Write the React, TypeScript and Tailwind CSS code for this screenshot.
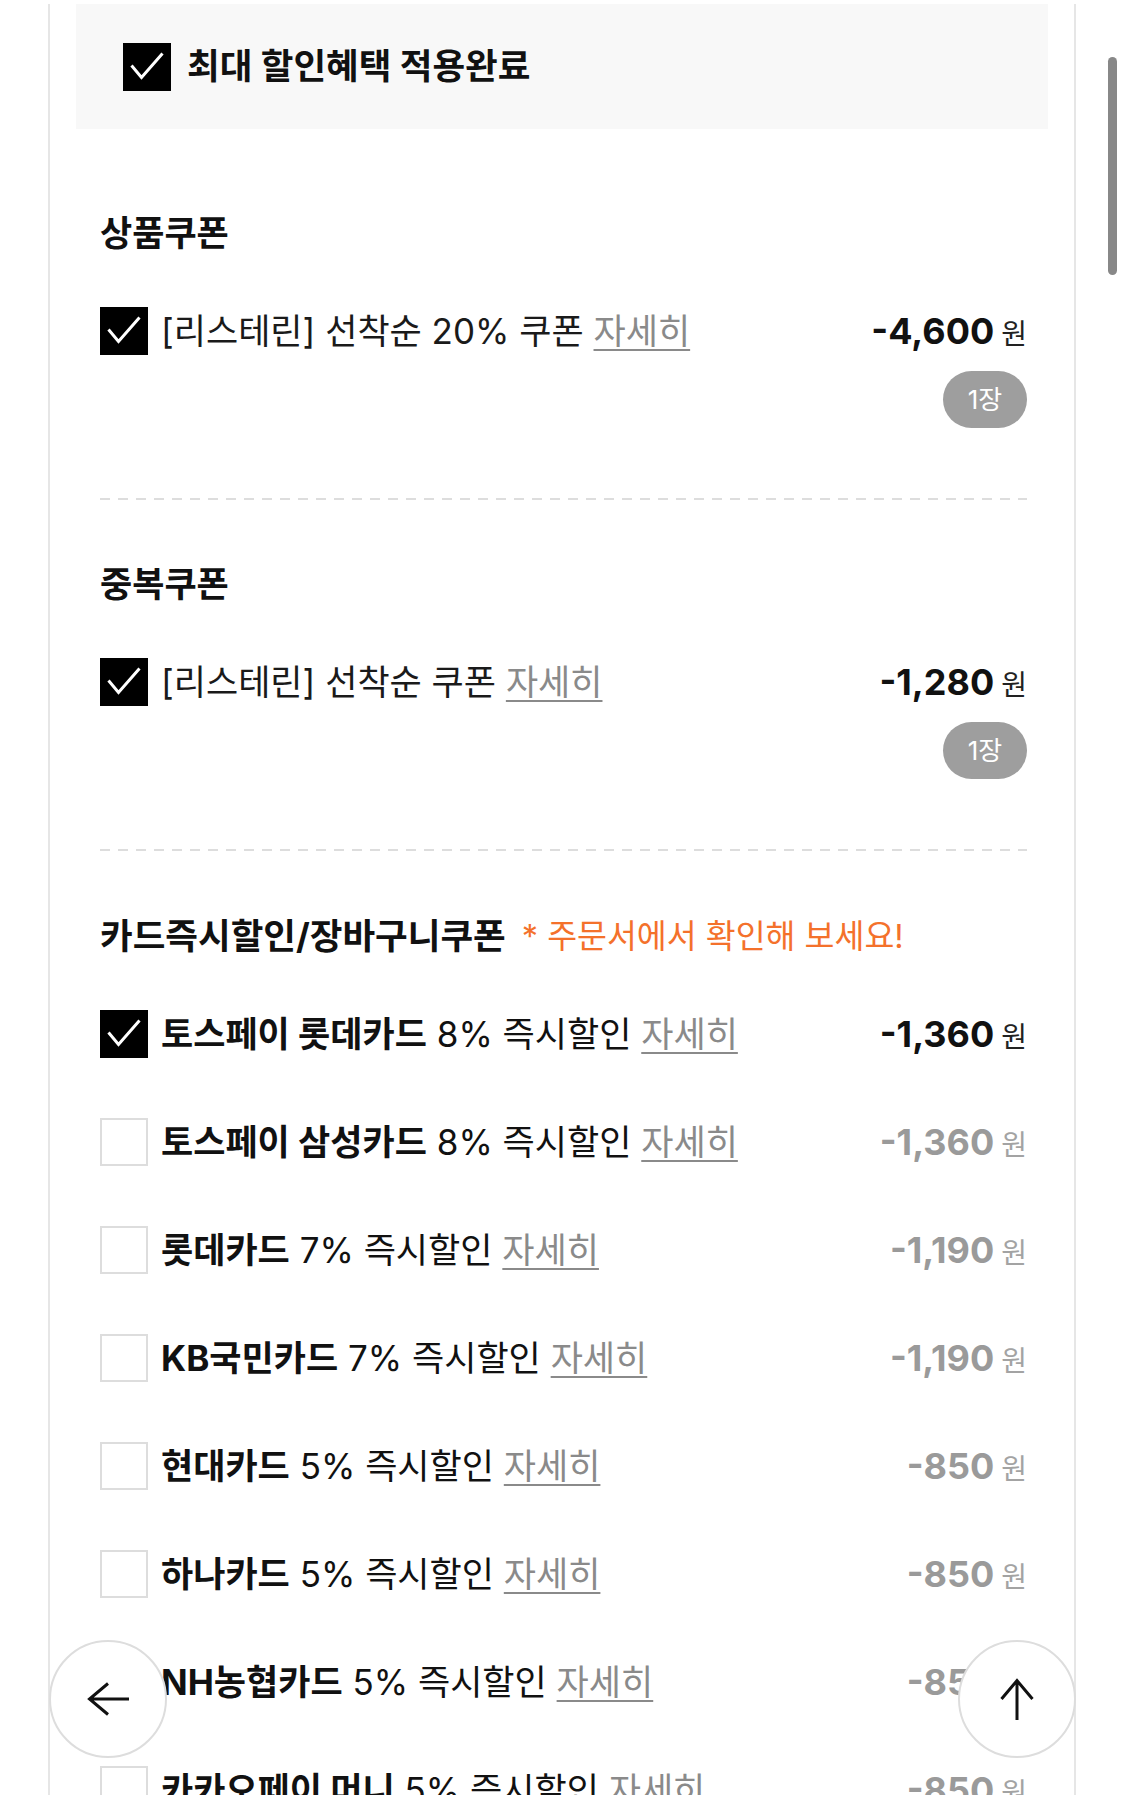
import React from 'react';

type CardRow = {
  name: string;
  rate: string;
  amount: string;
  checked?: boolean;
};

const cardRows: CardRow[] = [
  { name: '토스페이 롯데카드', rate: '8% 즉시할인', amount: '-1,360', checked: true },
  { name: '토스페이 삼성카드', rate: '8% 즉시할인', amount: '-1,360' },
  { name: '롯데카드', rate: '7% 즉시할인', amount: '-1,190' },
  { name: 'KB국민카드', rate: '7% 즉시할인', amount: '-1,190' },
  { name: '현대카드', rate: '5% 즉시할인', amount: '-850' },
  { name: '하나카드', rate: '5% 즉시할인', amount: '-850' },
  { name: 'NH농협카드', rate: '5% 즉시할인', amount: '-850' },
  { name: '카카오페이 머니', rate: '5% 즉시할인', amount: '-850' },
];

const dashed =
  'h-[2px] w-full bg-[linear-gradient(to_right,#dddddd_10px,transparent_10px)] bg-[length:18px_2px]';

const CheckBox = ({ on }: { on?: boolean }) =>
  on ? (
    <span className="flex h-[48px] w-[48px] shrink-0 items-center justify-center bg-black">
      <svg viewBox="0 0 48 48" className="h-[48px] w-[48px]">
        <polyline points="8.5,22.5 18.5,34.5 39.5,10.5" fill="none" stroke="white" strokeWidth="3" />
      </svg>
    </span>
  ) : (
    <span className="block h-[48px] w-[48px] shrink-0 border-2 border-[#dddddd] bg-white" />
  );

const Detail = () => (
  <span className="text-[#8a8a8a] underline decoration-2 underline-offset-[5px]">자세히</span>
);

const Amount = ({ value, on }: { value: string; on?: boolean }) => (
  <span className="flex shrink-0 items-baseline">
    <span className={'text-[36px] font-bold ' + (on ? 'text-[#111111]' : 'text-[#9a9a9a]')}>
      {value}
    </span>
    <span className={'ml-[7px] text-[28px] ' + (on ? 'text-[#222222]' : 'text-[#a3a3a3]')}>원</span>
  </span>
);

// 쿠폰 한 장짜리 섹션 (상품쿠폰 / 중복쿠폰)
const CouponSection = ({ title, label, amount, top }: { title: string; label: string; amount: string; top: string }) => (
  <section>
    <h3 className={'flex h-[40px] items-center text-[35px] font-bold leading-none text-[#111111] ' + top}>{title}</h3>
    <div className="mt-[54px] flex h-[48px] items-center">
      <CheckBox on />
      <p className="ml-[13px] flex-1 whitespace-nowrap text-[35px] leading-none text-[#1a1a1a]">
        {label} <Detail />
      </p>
      <Amount value={amount} on />
    </div>
    <div className="mt-[16px] flex justify-end">
      <span className="flex h-[57px] w-[84px] items-center justify-center rounded-full bg-[#9e9e9e] text-[26px] leading-none text-white">
        1장
      </span>
    </div>
    <div className={'mt-[70px] ' + dashed} />
  </section>
);

export default function App() {
  return (
    <div className="relative h-[1795px] w-[1125px] overflow-hidden bg-white font-[Inter,'Noto_Sans_CJK_KR',sans-serif]">
      <div className="ml-[48px] min-h-full w-[1028px] border-x-2 border-[#e6e6e6] px-[26px]">
        <div className="mt-[4px] flex h-[125px] items-center bg-[#f8f8f8] pl-[47px]">
          <CheckBox on />
          <span className="ml-[16px] text-[35.5px] font-bold leading-none text-[#111111]">최대 할인혜택 적용완료</span>
        </div>

        <div className="pl-[24px] pr-[21px]">
          <CouponSection title="상품쿠폰" label="[리스테린] 선착순 20% 쿠폰" amount="-4,600" top="mt-[84px]" />
          <CouponSection title="중복쿠폰" label="[리스테린] 선착순 쿠폰" amount="-1,280" top="mt-[64px]" />

          <section>
            <div className="mt-[66px] flex h-[40px] items-center leading-none">
              <h3 className="text-[35.5px] font-bold text-[#111111]">카드즉시할인/장바구니쿠폰</h3>
              <span className="ml-[16px] text-[32.5px] text-[#f4712b]">* 주문서에서 확인해 보세요!</span>
            </div>
            <div className="mt-[53px] flex flex-col gap-[60px]">
              {cardRows.map((row) => (
                <div key={row.name} className="flex h-[48px] items-center">
                  <CheckBox on={row.checked} />
                  <p className="ml-[13px] flex-1 whitespace-nowrap text-[35px] leading-none text-[#111111]">
                    <b className="font-bold">{row.name}</b> {row.rate} <Detail />
                  </p>
                  <Amount value={row.amount} on={row.checked} />
                </div>
              ))}
            </div>
          </section>
        </div>
      </div>

      {/* 플로팅 버튼 */}
      <button className="absolute left-[49px] top-[1640px] flex h-[118px] w-[118px] items-center justify-center rounded-full border-2 border-[#dddddd] bg-white">
        <svg viewBox="0 0 43 34" className="h-[34px] w-[43px]" fill="none" stroke="#111111" strokeWidth="3">
          <path d="M42 17H2.5M21 1.5L2.5 17L21 32.5" />
        </svg>
      </button>
      <button className="absolute left-[958px] top-[1640px] flex h-[118px] w-[118px] items-center justify-center rounded-full border-2 border-[#dddddd] bg-white">
        <svg viewBox="0 0 34 43" className="h-[43px] w-[34px]" fill="none" stroke="#111111" strokeWidth="3">
          <path d="M17 42V2.5M1.5 21L17 2.5L32.5 21" />
        </svg>
      </button>

      <div className="absolute left-[1108px] top-[57px] h-[218px] w-[9px] rounded-full bg-[#888888]" />
    </div>
  );
}
